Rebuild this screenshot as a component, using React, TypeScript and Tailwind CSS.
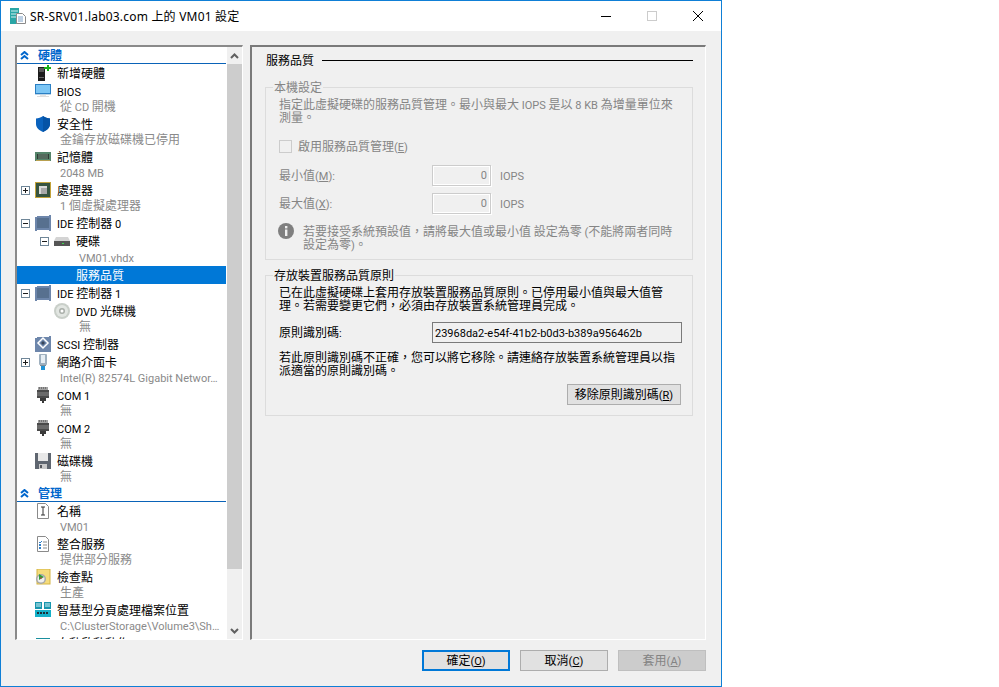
import type { ReactNode } from "react";

// latin runs sit a size smaller than the CJK text around them, as in the dialog's UI font
function T({ children }: { children: string }) {
  return (
    <>
      {children.split(/([\x20-\x7e…]+)/).map((part, i) =>
        i % 2 ? (
          <span key={i} className="font-['Roboto',sans-serif] text-[11px] leading-none">
            {part}
          </span>
        ) : (
          part
        )
      )}
    </>
  );
}

function Accel({ k }: { k: string }) {
  return (
    <span className="font-['Roboto',sans-serif] text-[11px] leading-none">
      (<u>{k}</u>)
    </span>
  );
}

const Icons: Record<string, ReactNode> = {
  add: (
    <svg width="16" height="16" viewBox="0 0 16 16">
      <rect x="3" y="2" width="7" height="14" fill="#1c1c1c" />
      <rect x="4" y="3" width="5" height="4" fill="#555" />
      <rect x="4" y="12" width="5" height="1" fill="#666" />
      <path d="M9 2h3V0h2v2h2v2h-2v2h-2V4H9z" fill="#18b018" />
    </svg>
  ),
  monitor: (
    <svg width="16" height="16" viewBox="0 0 16 16">
      <rect x="0" y="1" width="16" height="10" fill="#2a7fc4" />
      <rect x="1" y="2" width="14" height="8" fill="#7cc6f5" />
      <rect x="0" y="11" width="16" height="1" fill="#bcd4e6" />
      <rect x="5" y="12" width="6" height="1" fill="#e4e4e4" />
      <rect x="2" y="13" width="12" height="1" fill="#dddddd" />
    </svg>
  ),
  shield: (
    <svg width="16" height="16" viewBox="0 0 16 16">
      <path d="M8 0C6 1.6 3.4 2.4 1 2.4V8c0 3.6 3 6.4 7 8 4-1.6 7-4.4 7-8V2.4C12.6 2.4 10 1.6 8 0z" fill="#0a62bd" />
      <path d="M8 0v16c4-1.6 7-4.4 7-8V2.4C12.6 2.4 10 1.6 8 0z" fill="#0553a6" />
    </svg>
  ),
  ram: (
    <svg width="16" height="16" viewBox="0 0 16 16">
      <rect x="0" y="3" width="16" height="9" fill="#55846a" />
      <rect x="2" y="5" width="12" height="5" fill="#2e3b33" />
      <path d="M4 5v5M6 5v5M8 5v5M10 5v5M12 5v5" stroke="#7d9a88" />
      <rect x="1" y="11" width="14" height="1" fill="#b8a050" />
    </svg>
  ),
  cpu: (
    <svg width="16" height="16" viewBox="0 0 16 16">
      <rect x="0" y="0" width="16" height="16" fill="#c2a23a" />
      <rect x="1" y="1" width="14" height="14" fill="#36533f" />
      <rect x="4" y="4" width="8" height="8" fill="#d9d9d9" />
      <rect x="6" y="6" width="6" height="6" fill="#a8a8a8" />
    </svg>
  ),
  ctrl: (
    <svg width="16" height="16" viewBox="0 0 16 16">
      <path d="M0 2h2V1h12v-1h2v16h-2v-1H2v1H0z" fill="#6d86ab" />
      <rect x="2" y="3" width="12" height="10" fill="#57708f" />
    </svg>
  ),
  disk: (
    <svg width="16" height="16" viewBox="0 0 16 16">
      <path d="M2 4h12l2 4H0z" fill="#d4d4d4" />
      <rect x="0" y="8" width="16" height="5" fill="#555" />
      <rect x="8" y="10" width="2" height="1" fill="#3ddc50" />
    </svg>
  ),
  dvd: (
    <svg width="16" height="16" viewBox="0 0 16 16">
      <circle cx="8" cy="8" r="8" fill="#c9cfc9" />
      <circle cx="8" cy="8" r="6" fill="#e2e6e2" />
      <circle cx="8" cy="8" r="3" fill="#a9aea9" />
      <circle cx="8" cy="8" r="1.5" fill="#fff" />
    </svg>
  ),
  scsi: (
    <svg width="16" height="16" viewBox="0 0 16 16">
      <path d="M0 2h2V1h12v-1h2v16H0z" fill="#6d86ab" />
      <path d="M8 2l5 5-5 5-5-5z" fill="none" stroke="#fff" strokeWidth="1.5" />
      <path d="M8 5l2 2-2 2-2-2z" fill="#39465a" />
    </svg>
  ),
  nic: (
    <svg width="16" height="16" viewBox="0 0 16 16">
      <rect x="4" y="0" width="8" height="11" rx="1" fill="#9fb0bf" />
      <rect x="6" y="1" width="4" height="8" fill="#e6eef4" />
      <rect x="5" y="11" width="6" height="1" fill="#7d8d99" />
      <rect x="6" y="12" width="4" height="4" fill="#1f92d6" />
    </svg>
  ),
  com: (
    <svg width="16" height="16" viewBox="0 0 16 16">
      <rect x="3" y="0" width="10" height="3" fill="#a2a2a2" />
      <path d="M4 1h1M6 1h1M8 1h1M10 1h1" stroke="#444" />
      <rect x="2" y="3" width="12" height="8" fill="#4a4a4a" />
      <path d="M2 6h12M2 8h12" stroke="#8a8a8a" />
      <rect x="5" y="11" width="6" height="3" fill="#3a3a3a" />
      <rect x="7" y="14" width="2" height="2" fill="#3a3a3a" />
    </svg>
  ),
  floppy: (
    <svg width="16" height="16" viewBox="0 0 16 16">
      <rect x="0" y="0" width="16" height="16" fill="#5f6670" />
      <rect x="3" y="0" width="10" height="8" fill="#e8e8e8" />
      <rect x="4" y="11" width="8" height="5" fill="#c9c9c9" />
      <rect x="5" y="12" width="2" height="3" fill="#55585e" />
    </svg>
  ),
  name: (
    <svg width="16" height="16" viewBox="0 0 16 16">
      <path d="M2.5.5h8l3 3v12h-11z" fill="#fff" stroke="#8a8a8a" />
      <path d="M6 4h4M6 12h4M8 4v8" stroke="#333" fill="none" />
    </svg>
  ),
  integration: (
    <svg width="16" height="16" viewBox="0 0 16 16">
      <path d="M2.5.5h8l3 3v12h-11z" fill="#fff" stroke="#8a8a8a" />
      <path d="M4 6l1 1 2-2" stroke="#2f7fc8" fill="none" />
      <path d="M8 6h4M8 9h4M8 12h4" stroke="#8a8a8a" />
      <rect x="4" y="8" width="2" height="2" fill="#2f7fc8" />
      <rect x="4" y="11" width="2" height="2" fill="#2f7fc8" />
    </svg>
  ),
  checkpoint: (
    <svg width="16" height="16" viewBox="0 0 16 16">
      <rect x="2" y="0" width="13" height="15" fill="#f5dc7c" stroke="#d4b445" />
      <circle cx="6" cy="10" r="5" fill="#a8a8a8" />
      <circle cx="6" cy="10" r="3.5" fill="#f0f0f0" />
      <path d="M4 5l5 3-5 3z" fill="#2f9e3a" />
      <path d="M6 10V8" stroke="#c33" />
    </svg>
  ),
  paging: (
    <svg width="16" height="16" viewBox="0 0 16 16">
      <rect x="0" y="0" width="7" height="7" fill="#1796ad" />
      <rect x="9" y="0" width="7" height="7" fill="#1796ad" />
      <path d="M1 2h5M10 2h5M1 4h5M10 4h5" stroke="#d8f1f5" />
      <rect x="0" y="8" width="16" height="7" fill="#14b0c8" />
      <path d="M2 11h12" stroke="#1b2e38" strokeWidth="2" strokeDasharray="2 1" />
    </svg>
  ),
  auto: (
    <svg width="16" height="16" viewBox="0 0 16 16">
      <rect x="1" y="3" width="14" height="12" fill="#1a8f9e" />
      <rect x="1" y="7" width="14" height="2" fill="#bfe5ea" />
    </svg>
  ),
};

function Expander({ open }: { open: boolean }) {
  return (
    <svg width="9" height="9" viewBox="0 0 9 9">
      <rect x="0.5" y="0.5" width="8" height="8" fill="#fff" stroke="#6f8698" />
      <path d={open ? "M2 4.5h5" : "M2 4.5h5M4.5 2v5"} stroke="#1c1c1c" />
    </svg>
  );
}

function Header({ title }: { title: string }) {
  return (
    <div className="flex h-[17px] shrink-0 items-center border-b border-[#0a63b8] pl-[3px] font-bold text-[#0066cc]">
      <svg width="9" height="9" viewBox="0 0 9 9" className="shrink-0">
        <path d="M1 4l3.5-3L8 4M1 8l3.5-3L8 8" fill="none" stroke="#0066cc" strokeWidth="2" />
      </svg>
      <span className="ml-[9px]">{title}</span>
    </div>
  );
}

function Item({
  icon,
  label,
  level = 1,
  expander,
  selected,
}: {
  icon?: string;
  label: string;
  level?: 1 | 2;
  expander?: "open" | "closed";
  selected?: boolean;
}) {
  return (
    <div
      className={
        "flex h-[18px] shrink-0 items-center whitespace-nowrap " +
        (level === 2 ? "pl-[23px] " : "pl-[4px] ") +
        (selected ? "bg-[#0078d7] text-white" : "text-black")
      }
    >
      <div className="flex w-[14px] shrink-0 items-center">
        {expander && <Expander open={expander === "open"} />}
      </div>
      <div className="flex w-[22px] shrink-0 items-center">{icon && Icons[icon]}</div>
      <span>
        <T>{label}</T>
      </span>
    </div>
  );
}

function Sub({ label, level = 1, tall }: { label: string; level?: 1 | 2; tall?: boolean }) {
  return (
    <div
      className={
        "flex shrink-0 items-center whitespace-nowrap pb-[2px] text-[#8a8a8a] " +
        (tall ? "h-[16px] " : "h-[15px] ") +
        (level === 2 ? "pl-[62px]" : "pl-[43px]")
      }
    >
      <span>
        <T>{label}</T>
      </span>
    </div>
  );
}

function Tree() {
  return (
    <div className="flex w-[228px] shrink-0 border-t-2 border-r border-b border-l-2 border-t-[#8a8a8a] border-r-white border-b-white border-l-[#8a8a8a]">
      <div className="flex w-[209px] flex-col overflow-hidden bg-white">
        <Header title="硬體" />
        <Item icon="add" label="新增硬體" />
        <Item icon="monitor" label="BIOS" />
        <Sub label="從 CD 開機" />
        <Item icon="shield" label="安全性" />
        <Sub label="金鑰存放磁碟機已停用" />
        <Item icon="ram" label="記憶體" />
        <Sub label="2048 MB" />
        <Item icon="cpu" label="處理器" expander="closed" />
        <Sub label="1 個虛擬處理器" />
        <Item icon="ctrl" label="IDE 控制器 0" expander="open" />
        <Item icon="disk" label="硬碟" level={2} expander="open" />
        <Sub label="VM01.vhdx" level={2} tall />
        <Item label="服務品質" level={2} selected />
        <Item icon="ctrl" label="IDE 控制器 1" expander="open" />
        <Item icon="dvd" label="DVD 光碟機" level={2} />
        <Sub label="無" level={2} />
        <Item icon="scsi" label="SCSI 控制器" />
        <Item icon="nic" label="網路介面卡" expander="closed" />
        <Sub label="Intel(R) 82574L Gigabit Networ…" />
        <Item icon="com" label="COM 1" />
        <Sub label="無" />
        <Item icon="com" label="COM 2" />
        <Sub label="無" />
        <Item icon="floppy" label="磁碟機" />
        <Sub label="無" />
        <Header title="管理" />
        <Item icon="name" label="名稱" />
        <Sub label="VM01" />
        <Item icon="integration" label="整合服務" />
        <Sub label="提供部分服務" />
        <Item icon="checkpoint" label="檢查點" />
        <Sub label="生產" />
        <Item icon="paging" label="智慧型分頁處理檔案位置" />
        <Sub label="C:\ClusterStorage\Volume3\Sh…" />
        <Item icon="auto" label="自動啟動動作" />
      </div>
      <div className="flex w-[16px] flex-col border-l border-white bg-[#f0f0f0]">
        <div className="flex h-[17px] shrink-0 items-center justify-center">
          <svg width="9" height="6" viewBox="0 0 9 6">
            <path d="M1 5l3.5-3.5L8 5" fill="none" stroke="#606060" strokeWidth="2" />
          </svg>
        </div>
        <div className="h-[505px] shrink-0 bg-[#cdcdcd]" />
        <div className="flex-1" />
        <div className="flex h-[17px] shrink-0 items-center justify-center">
          <svg width="9" height="6" viewBox="0 0 9 6">
            <path d="M1 1l3.5 3.5L8 1" fill="none" stroke="#606060" strokeWidth="2" />
          </svg>
        </div>
      </div>
    </div>
  );
}

function DisabledField({ label, accel }: { label: string; accel: string }) {
  return (
    <div className="flex h-[21px] items-center">
      <span className="w-[153px]">
        {label}
        <Accel k={accel} />
        <T>:</T>
      </span>
      <div className="flex h-[21px] w-[59px] items-center justify-end border border-[#cccccc] pr-[3px] shadow-[inset_0_0_0_1px_#ffffff,1px_1px_0_#ffffff]">
        <T>0</T>
      </div>
      <span className="ml-[9px]">
        <T>IOPS</T>
      </span>
    </div>
  );
}

function QosPanel() {
  return (
    <div className="flex flex-1 flex-col border-t-2 border-r border-b border-l-2 border-t-[#7a7a7a] border-r-white border-b-white border-l-[#7a7a7a] pt-[6px] pr-[12px] pl-[13px]">
      <div className="flex h-[14px] items-center gap-[8px] pl-[1px]">
        <span className="whitespace-nowrap text-black">服務品質</span>
        <div className="h-px flex-1 bg-black" />
      </div>

      <fieldset className="mt-[14px] border border-[#dcdcdc] pr-[11px] pb-[8px] pl-[13px] text-[#858585]">
        <legend className="-ml-[6px] h-[13px] px-px leading-[13px]">本機設定</legend>
        <p className="mt-[4px] whitespace-nowrap">
          <T>指定此虛擬硬碟的服務品質管理。最小與最大 IOPS 是以 8 KB 為增量單位來</T>
          <br />
          測量。
        </p>
        <label className="mt-[16px] flex h-[13px] items-center">
          <span className="h-[13px] w-[13px] border border-[#cccccc]" />
          <span className="ml-[6px]">
            啟用服務品質管理
            <Accel k="E" />
          </span>
        </label>
        <div className="mt-[12px] flex flex-col gap-[7px]">
          <DisabledField label="最小值" accel="M" />
          <DisabledField label="最大值" accel="X" />
        </div>
        <div className="mt-[9px] flex">
          <svg width="16" height="16" viewBox="0 0 16 16" className="-ml-px shrink-0">
            <circle cx="8" cy="8" r="8" fill="#7f7f7f" />
            <rect x="7" y="3" width="2.4" height="2.4" fill="#f0f0f0" />
            <rect x="7" y="6.5" width="2.4" height="6.5" fill="#f0f0f0" />
          </svg>
          <p className="mt-[2px] ml-[9px] whitespace-nowrap">
            <T>若要接受系統預設值，請將最大值或最小值 設定為零 (不能將兩者同時</T>
            <br />
            <T>設定為零)。</T>
          </p>
        </div>
      </fieldset>

      <fieldset className="mt-[9px] border border-[#dcdcdc] pr-[10px] pb-[10px] pl-[13px] text-black">
        <legend className="-ml-[6px] h-[13px] px-px leading-[13px]">存放裝置服務品質原則</legend>
        <p className="mt-[4px] whitespace-nowrap">
          已在此虛擬硬碟上套用存放裝置服務品質原則。已停用最小值與最大值管
          <br />
          理。若需要變更它們，必須由存放裝置系統管理員完成。
        </p>
        <div className="mt-[10px] flex h-[21px] items-center">
          <span className="w-[153px]">
            <T>原則識別碼:</T>
          </span>
          <div className="flex h-[21px] w-[250px] items-center border border-[#7a7a7a] pl-[2px]">
            <span>
              <T>23968da2-e54f-41b2-b0d3-b389a956462b</T>
            </span>
          </div>
        </div>
        <p className="mt-[8px] whitespace-nowrap">
          若此原則識別碼不正確，您可以將它移除。請連絡存放裝置系統管理員以指
          <br />
          派適當的原則識別碼。
        </p>
        <div className="mt-[7px] flex justify-end pr-px">
          <button className="h-[21px] w-[114px] border border-[#adadad] bg-[#e1e1e1]">
            移除原則識別碼
            <Accel k="R" />
          </button>
        </div>
      </fieldset>
    </div>
  );
}

export default function App() {
  return (
    <div className="h-[687px] w-[999px] bg-white font-['Noto_Sans','Noto_Sans_CJK_TC',sans-serif] text-[12px] leading-[13px] text-black">
      <div className="flex h-[687px] w-[722px] flex-col border border-[#0f7fd6]">
        <div className="flex h-[30px] shrink-0 items-center bg-white">
          <svg width="16" height="16" viewBox="0 0 16 16" className="ml-[9px] shrink-0">
            <rect x="0" y="0" width="9" height="16" fill="#2aa6a6" />
            <path d="M1 3h7M1 6h7M1 9h7" stroke="#d5f0f0" />
            <path d="M6.5 5.5h6l3 3v7h-9z" fill="#fff" stroke="#8a8a8a" />
            <path d="M8 9h5M8 11h5M8 13h5" stroke="#7aa0c8" />
          </svg>
          <span className="ml-[4px] whitespace-nowrap tracking-[0.2px]">
            SR-SRV01.lab03.com 上的 VM01 設定
          </span>
          <div className="ml-auto flex">
            <div className="flex h-[30px] w-[46px] items-center justify-center">
              <svg width="10" height="10" viewBox="0 0 10 10">
                <path d="M0 5.5h10" stroke="#000" />
              </svg>
            </div>
            <div className="flex h-[30px] w-[46px] items-center justify-center">
              <svg width="10" height="10" viewBox="0 0 10 10">
                <rect x="0.5" y="0.5" width="9" height="9" fill="none" stroke="#cccccc" />
              </svg>
            </div>
            <div className="flex h-[30px] w-[46px] items-center justify-center">
              <svg width="10" height="10" viewBox="0 0 10 10">
                <path d="M0 0l10 10M10 0L0 10" stroke="#000" />
              </svg>
            </div>
          </div>
        </div>

        <div className="flex flex-1 flex-col bg-[#f0f0f0] pt-[14px] pr-[15px] pl-[14px]">
          <div className="flex h-[595px] gap-[7px]">
            <Tree />
            <QosPanel />
          </div>
          <div className="flex justify-end gap-[10px] pt-[10px]">
            <button className="h-[21px] w-[88px] border-2 border-[#0078d7] bg-[#e1e1e1]">
              確定
              <Accel k="O" />
            </button>
            <button className="h-[21px] w-[88px] border border-[#adadad] bg-[#e1e1e1]">
              取消
              <Accel k="C" />
            </button>
            <button className="h-[21px] w-[88px] border border-[#bfbfbf] bg-[#cccccc] text-[#838383]">
              套用
              <Accel k="A" />
            </button>
          </div>
        </div>
      </div>
    </div>
  );
}
